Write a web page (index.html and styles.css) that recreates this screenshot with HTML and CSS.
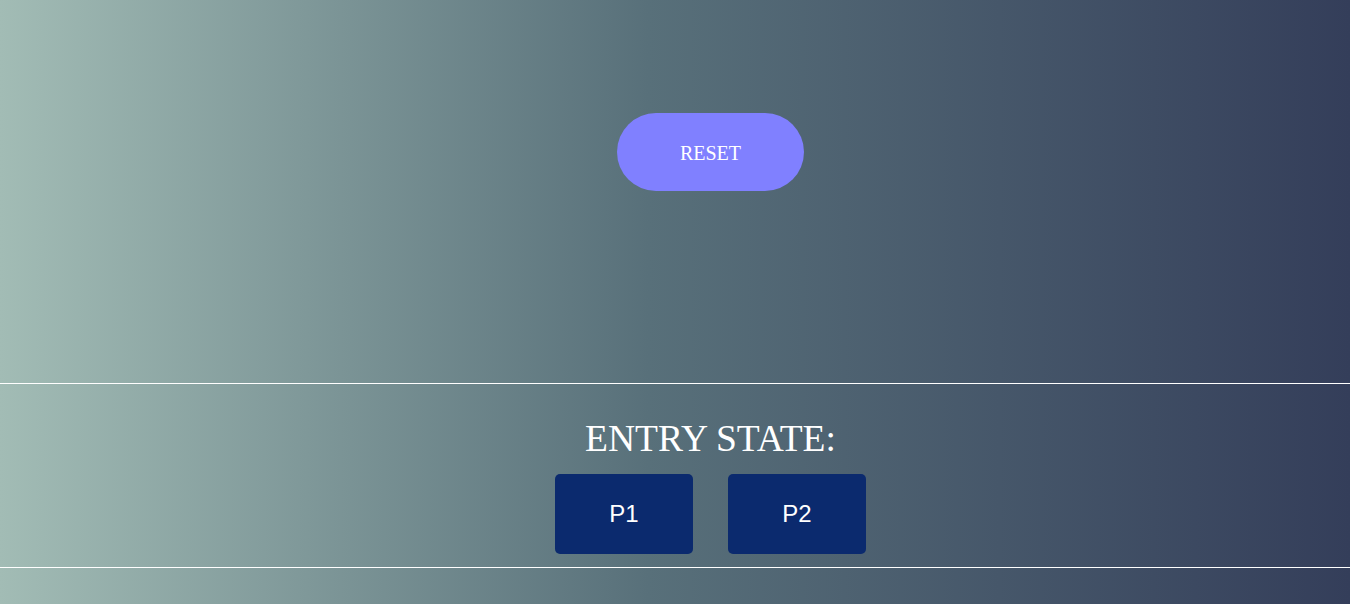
FILE: index.html
```html
<!DOCTYPE html>
<html>
<head>
<meta charset="utf-8">
<link rel="stylesheet" href="styles.css">
</head>
<body>
<div class="page">
  <section class="top">
    <button class="reset">RESET</button>
  </section>
  <hr class="rule">
  <section class="entry">
    <h2 class="entry-title">ENTRY STATE:</h2>
    <div class="players">
      <button class="player">P1</button>
      <button class="player">P2</button>
    </div>
  </section>
  <hr class="rule">
</div>
</body>
</html>
```

FILE: styles.css
```css
html, body {
  margin: 0;
  padding: 0;
  height: 100%;
}
body {
  background: linear-gradient(to right, #a2bcb5 0%, #58707a 48%, #343e5a 100%);
  font-family: "Liberation Serif", "Times New Roman", serif;
  color: #fff;
  overflow: hidden;
}
.page {
  display: flex;
  flex-direction: column;
}
.top {
  height: 383px;
  display: flex;
  justify-content: center;
  align-items: flex-start;
  padding-left: 71px;
  box-sizing: border-box;
}
.reset {
  margin-top: 113px;
  width: 187px;
  height: 78px;
  border: none;
  border-radius: 40px;
  background: #8080ff;
  color: #fff;
  font-family: "Liberation Serif", "Times New Roman", serif;
  font-size: 20px;
  padding: 2px 0 0;
}
.rule {
  margin: 0;
  border: none;
  border-top: 1px solid #fff;
  height: 0;
}
.entry {
  display: flex;
  flex-direction: column;
  align-items: center;
  padding-left: 71px;
  height: 183px;
  box-sizing: border-box;
}
.entry-title {
  margin: 34px 0 0;
  font-weight: normal;
  font-size: 37.5px;
  line-height: 42px;
}
.players {
  display: flex;
  gap: 35px;
  margin-top: 14px;
}
.player {
  width: 138px;
  height: 80px;
  border: none;
  border-radius: 5px;
  background: #0b2a6e;
  color: #fff;
  font-family: "Liberation Sans", Arial, sans-serif;
  font-size: 24px;
  padding: 0;
}
```
